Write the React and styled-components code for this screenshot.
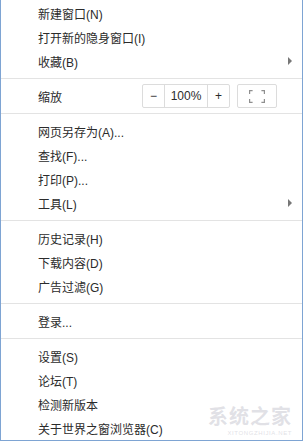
import React from 'react';
import styled, { createGlobalStyle } from 'styled-components';

const GlobalStyle = createGlobalStyle`
    html, body {
        margin: 0;
        padding: 0;
        background: #fff;
    }
    body {
        font-family: "Liberation Sans", "Noto Sans CJK SC", sans-serif;
    }
`;

const Menu = styled.div`
    position: relative;
    box-sizing: border-box;
    width: 303px;
    height: 441px;
    padding-top: 1px;
    background: #fff;
    border: 1px solid #7ea4d3;
    border-top: none;
    overflow: hidden;
    display: flex;
    flex-direction: column;
`;

const Item = styled.div`
    display: flex;
    align-items: center;
    justify-content: space-between;
    flex: 0 0 24px;
    height: 24px;
    padding: 0 10px 0 37px;
    font-size: 12px;
    color: #2b2b2b;
    white-space: nowrap;
`;

const Arrow = styled.span`
    width: 0;
    height: 0;
    border-top: 4px solid transparent;
    border-bottom: 4px solid transparent;
    border-left: 4px solid #777;
`;

const Separator = styled.div`
    flex: 0 0 1px;
    margin: 5px 0;
    background: #e3e3e3;
`;

const ZoomRow = styled(Item)`
    padding-right: 25px;
`;

const Controls = styled.div`
    display: flex;
    align-items: center;
    gap: 7px;
`;

const Group = styled.div`
    display: flex;
    height: 24px;
    border: 1px solid #dcdcdc;
    border-radius: 2px;
    box-sizing: border-box;
`;

const Cell = styled.div`
    width: ${p => p.w}px;
    display: flex;
    align-items: center;
    justify-content: center;
    font-size: 12px;
    color: #2b2b2b;
    & + & {
        border-left: 1px solid #dcdcdc;
    }
`;

const FullBtn = styled.div`
    box-sizing: border-box;
    width: 40px;
    height: 24px;
    border: 1px solid #dcdcdc;
    border-radius: 2px;
    display: flex;
    align-items: center;
    justify-content: center;
`;

const Watermark = styled.div`
    position: absolute;
    right: 10px;
    bottom: 4px;
    display: flex;
    flex-direction: column;
    align-items: flex-end;
    color: rgba(195, 195, 205, 0.5);
    pointer-events: none;
`;

const MarkTitle = styled.span`
    font-family: "Noto Sans CJK SC", sans-serif;
    font-size: 20px;
    font-weight: bold;
    letter-spacing: 1px;
`;

const MarkSub = styled.span`
    font-size: 6px;
    letter-spacing: 0.6px;
`;

const FullIcon = () => (
    <svg width="16" height="13" viewBox="0 0 16 13" fill="none" stroke="#8f8f8f" strokeWidth="1.2">
        <path d="M0.6 4V0.6H3.6M12.4 0.6H15.4V4M15.4 9V12.4H12.4M3.6 12.4H0.6V9" />
    </svg>
);

const App = () => {
    return (
        <>
            <GlobalStyle />
            <Menu>
                <Item>新建窗口(N)</Item>
                <Item>打开新的隐身窗口(I)</Item>
                <Item>收藏(B)<Arrow /></Item>
                <Separator />
                <ZoomRow>
                    缩放
                    <Controls>
                        <Group>
                            <Cell w={21}>−</Cell>
                            <Cell w={42}>100%</Cell>
                            <Cell w={21}>+</Cell>
                        </Group>
                        <FullBtn><FullIcon /></FullBtn>
                    </Controls>
                </ZoomRow>
                <Separator />
                <Item>网页另存为(A)...</Item>
                <Item>查找(F)...</Item>
                <Item>打印(P)...</Item>
                <Item>工具(L)<Arrow /></Item>
                <Separator />
                <Item>历史记录(H)</Item>
                <Item>下载内容(D)</Item>
                <Item>广告过滤(G)</Item>
                <Separator />
                <Item>登录...</Item>
                <Separator />
                <Item>设置(S)</Item>
                <Item>论坛(T)</Item>
                <Item>检测新版本</Item>
                <Item>关于世界之窗浏览器(C)</Item>
                <Watermark>
                    <MarkTitle>系统之家</MarkTitle>
                    <MarkSub>XITONGZHIJIA.NET</MarkSub>
                </Watermark>
            </Menu>
        </>
    );
};

export default App;
